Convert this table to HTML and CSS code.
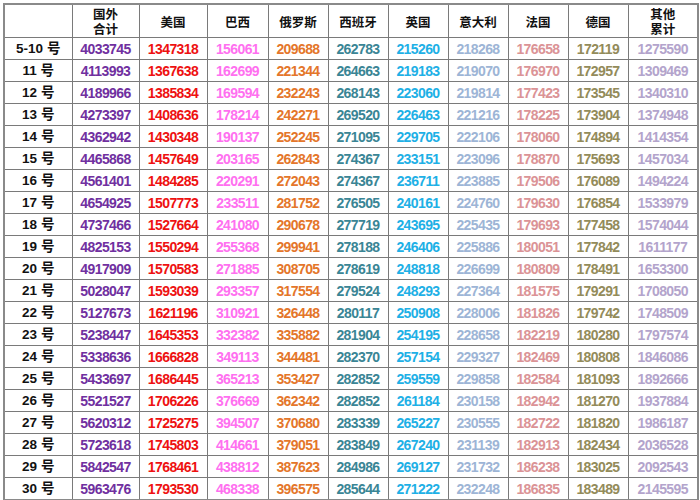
FILE: index.html
```html
<!DOCTYPE html>
<html lang="zh">
<head>
<meta charset="utf-8">
<title>累计确诊</title>
<link rel="stylesheet" href="styles.css">
</head>
<body>
<table class="grid">
<colgroup>
<col class="c-a"><col class="c-b"><col class="c-c"><col class="c-d"><col class="c-n"><col class="c-n"><col class="c-n"><col class="c-n"><col class="c-n"><col class="c-n"><col class="c-z">
</colgroup>
<thead>
<tr><th></th><th><span class="ln">国外</span><span class="ln">合计</span></th><th>美国</th><th>巴西</th><th>俄罗斯</th><th>西班牙</th><th>英国</th><th>意大利</th><th>法国</th><th>德国</th><th><span class="ln">其他</span><span class="ln">累计</span></th></tr>
</thead>
<tbody>
<tr><td>5-10 号</td><td>4033745</td><td>1347318</td><td>156061</td><td>209688</td><td>262783</td><td>215260</td><td>218268</td><td>176658</td><td>172119</td><td>1275590</td></tr>
<tr><td>11 号</td><td>4113993</td><td>1367638</td><td>162699</td><td>221344</td><td>264663</td><td>219183</td><td>219070</td><td>176970</td><td>172957</td><td>1309469</td></tr>
<tr><td>12 号</td><td>4189966</td><td>1385834</td><td>169594</td><td>232243</td><td>268143</td><td>223060</td><td>219814</td><td>177423</td><td>173545</td><td>1340310</td></tr>
<tr><td>13 号</td><td>4273397</td><td>1408636</td><td>178214</td><td>242271</td><td>269520</td><td>226463</td><td>221216</td><td>178225</td><td>173904</td><td>1374948</td></tr>
<tr><td>14 号</td><td>4362942</td><td>1430348</td><td>190137</td><td>252245</td><td>271095</td><td>229705</td><td>222106</td><td>178060</td><td>174894</td><td>1414354</td></tr>
<tr><td>15 号</td><td>4465868</td><td>1457649</td><td>203165</td><td>262843</td><td>274367</td><td>233151</td><td>223096</td><td>178870</td><td>175693</td><td>1457034</td></tr>
<tr><td>16 号</td><td>4561401</td><td>1484285</td><td>220291</td><td>272043</td><td>274367</td><td>236711</td><td>223885</td><td>179506</td><td>176089</td><td>1494224</td></tr>
<tr><td>17 号</td><td>4654925</td><td>1507773</td><td>233511</td><td>281752</td><td>276505</td><td>240161</td><td>224760</td><td>179630</td><td>176854</td><td>1533979</td></tr>
<tr><td>18 号</td><td>4737466</td><td>1527664</td><td>241080</td><td>290678</td><td>277719</td><td>243695</td><td>225435</td><td>179693</td><td>177458</td><td>1574044</td></tr>
<tr><td>19 号</td><td>4825153</td><td>1550294</td><td>255368</td><td>299941</td><td>278188</td><td>246406</td><td>225886</td><td>180051</td><td>177842</td><td>1611177</td></tr>
<tr><td>20 号</td><td>4917909</td><td>1570583</td><td>271885</td><td>308705</td><td>278619</td><td>248818</td><td>226699</td><td>180809</td><td>178491</td><td>1653300</td></tr>
<tr><td>21 号</td><td>5028047</td><td>1593039</td><td>293357</td><td>317554</td><td>279524</td><td>248293</td><td>227364</td><td>181575</td><td>179291</td><td>1708050</td></tr>
<tr><td>22 号</td><td>5127673</td><td>1621196</td><td>310921</td><td>326448</td><td>280117</td><td>250908</td><td>228006</td><td>181826</td><td>179742</td><td>1748509</td></tr>
<tr><td>23 号</td><td>5238447</td><td>1645353</td><td>332382</td><td>335882</td><td>281904</td><td>254195</td><td>228658</td><td>182219</td><td>180280</td><td>1797574</td></tr>
<tr><td>24 号</td><td>5338636</td><td>1666828</td><td>349113</td><td>344481</td><td>282370</td><td>257154</td><td>229327</td><td>182469</td><td>180808</td><td>1846086</td></tr>
<tr><td>25 号</td><td>5433697</td><td>1686445</td><td>365213</td><td>353427</td><td>282852</td><td>259559</td><td>229858</td><td>182584</td><td>181093</td><td>1892666</td></tr>
<tr><td>26 号</td><td>5521527</td><td>1706226</td><td>376669</td><td>362342</td><td>282852</td><td>261184</td><td>230158</td><td>182942</td><td>181270</td><td>1937884</td></tr>
<tr><td>27 号</td><td>5620312</td><td>1725275</td><td>394507</td><td>370680</td><td>283339</td><td>265227</td><td>230555</td><td>182722</td><td>181820</td><td>1986187</td></tr>
<tr><td>28 号</td><td>5723618</td><td>1745803</td><td>414661</td><td>379051</td><td>283849</td><td>267240</td><td>231139</td><td>182913</td><td>182434</td><td>2036528</td></tr>
<tr><td>29 号</td><td>5842547</td><td>1768461</td><td>438812</td><td>387623</td><td>284986</td><td>269127</td><td>231732</td><td>186238</td><td>183025</td><td>2092543</td></tr>
<tr><td>30 号</td><td>5963476</td><td>1793530</td><td>468338</td><td>396575</td><td>285644</td><td>271222</td><td>232248</td><td>186835</td><td>183489</td><td>2145595</td></tr>
</tbody>
</table>
</body>
</html>
```
FILE: styles.css
```css
html, body {
  margin: 0;
  padding: 0;
  background: #ffffff;
}
body {
  padding: 3px 0 0 3px;
  font-family: "Liberation Sans", "Noto Sans CJK SC", sans-serif;
}
.grid {
  border-collapse: collapse;
  table-layout: fixed;
  width: 694px;
  border: 2px solid #8a8a8a;
}
.c-a { width: 68px; }
.c-b { width: 67px; }
.c-c { width: 68px; }
.c-d { width: 61px; }
.c-n { width: 60px; }
.c-z { width: 70px; }
.grid th,
.grid td {
  border: 1px solid #7a7a7a;
  padding: 0;
  text-align: center;
  vertical-align: middle;
  font-weight: bold;
}
.grid th {
  height: 32px;
  font-family: "Noto Sans CJK SC", sans-serif;
  font-size: 12.5px;
  line-height: 15px;
  color: #111111;
}
.ln {
  display: block;
  height: 15px;
  line-height: 15px;
}
.grid td {
  height: 21px;
  font-size: 14px;
  letter-spacing: -0.6px;
  line-height: 16px;
}
.grid td:nth-child(1) { color: #111111; letter-spacing: 0; font-size: 13.5px; }
.grid td:nth-child(2) { color: #7030a0; }
.grid td:nth-child(3) { color: #ee1111; }
.grid td:nth-child(4) { color: #ff70f0; }
.grid td:nth-child(5) { color: #e4762a; }
.grid td:nth-child(6) { color: #3a8595; }
.grid td:nth-child(7) { color: #1eb0e6; }
.grid td:nth-child(8) { color: #9db5d6; }
.grid td:nth-child(9) { color: #db9396; }
.grid td:nth-child(10) { color: #938b5a; }
.grid td:nth-child(11) { color: #b3a4cc; }
```
